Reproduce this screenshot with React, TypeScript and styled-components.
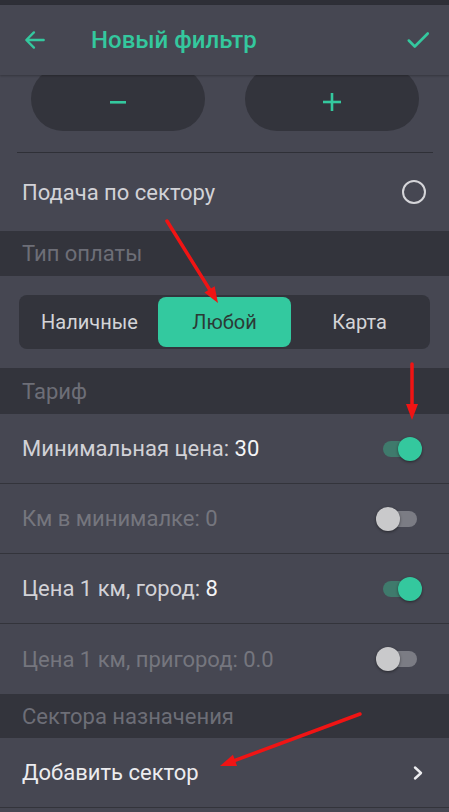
import React from 'react';
import styled, {createGlobalStyle} from "styled-components";

const GlobalStyle = createGlobalStyle`
  body {
    margin: 0;
    background: #464752;
    font-family: Roboto, "Noto Sans", sans-serif;
  }
`;

const GREEN = "#34c89e";

const Screen = styled.div`
  position: relative;
  width: 449px;
  height: 812px;
  overflow: hidden;
  background: #464752;
`;

const StatusStrip = styled.div`
  height: 5px;
  background: #2e2f37;
`;

const AppBar = styled.div`
  position: relative;
  z-index: 2;
  height: 70px;
  display: flex;
  align-items: center;
  padding: 0 18px 0 22px;
  background: #464752;
  box-shadow: 0 1px 2px rgba(0, 0, 0, 0.25);
`;

const Title = styled.div`
  flex: 1;
  margin-left: 43px;
  color: ${GREEN};
  font-size: 24px;
  font-weight: 500;
`;

const StepperWrap = styled.div`
  padding: 0 16px 0 17px;
`;

const Stepper = styled.div`
  display: flex;
  justify-content: space-between;
  padding: 0 14px 21px 14px;
  margin-top: -8px;
  border-bottom: 1px solid #2f3037;
`;

const Pill = styled.div`
  width: 174px;
  height: 64px;
  border-radius: 32px;
  background: #33343c;
  display: flex;
  align-items: center;
  justify-content: center;
  padding-top: 6px;
  box-sizing: border-box;
`;

const Row = styled.div<{tall?: boolean; last?: boolean}>`
  height: ${({tall}) => (tall ? 78 : 70)}px;
  display: flex;
  align-items: center;
  justify-content: space-between;
  padding: 0 22px;
  border-bottom: ${({last}) => (last ? "none" : "1px solid #33343b")};
  box-sizing: border-box;
`;

const Label = styled.div<{disabled?: boolean; bright?: boolean}>`
  font-size: 22px;
  color: ${({disabled, bright}) => (disabled ? "#75767e" : bright ? "#ececef" : "#d2d2d7")};
  b {
    font-weight: 400;
    color: #f4f4f6;
  }
`;

const SectionHeader = styled.div<{h: number}>`
  height: ${({h}) => h}px;
  display: flex;
  align-items: center;
  padding: 0 22px;
  background: #33343c;
  color: #6d6e77;
  font-size: 22px;
  box-sizing: border-box;
`;

const Radio = styled.div`
  width: 20px;
  height: 20px;
  border: 2.5px solid #d5d5d9;
  border-radius: 50%;
  margin-right: 1px;
`;

const SegmentArea = styled.div`
  padding: 19px;
`;

const Segment = styled.div`
  height: 54px;
  display: flex;
  align-items: center;
  background: #33343c;
  border-radius: 8px;
  padding: 2px;
  box-sizing: border-box;
`;

const SegItem = styled.div<{active?: boolean}>`
  flex: 1;
  height: 50px;
  display: flex;
  align-items: center;
  justify-content: center;
  border-radius: 8px;
  font-size: 20px;
  color: ${({active}) => (active ? "#2b3a36" : "#d4d4d8")};
  background: ${({active}) => (active ? "#33c99f" : "transparent")};
  &:first-child {
    flex: 0 0 137px;
  }
  &:nth-child(2) {
    flex: 0 0 133px;
  }
`;

const Track = styled.div<{on?: boolean}>`
  position: relative;
  width: 34px;
  height: 16px;
  border-radius: 8px;
  margin-right: 10px;
  background: ${({on}) => (on ? "#3f7a6c" : "#7b7c84")};
`;

const Thumb = styled.div<{on?: boolean}>`
  position: absolute;
  top: -4px;
  left: ${({on}) => (on ? 15 : -7)}px;
  width: 24px;
  height: 24px;
  border-radius: 50%;
  background: ${({on}) => (on ? GREEN : "#c9c9cb")};
  box-shadow: 0 1px 3px rgba(0, 0, 0, 0.45);
`;

const Overlay = styled.svg`
  position: absolute;
  left: 0;
  top: 0;
  pointer-events: none;
  z-index: 5;
`;

const Toggle = ({on}: {on?: boolean}) => (
    <Track on={on}>
        <Thumb on={on}/>
    </Track>
);

const Arrow = ({x1, y1, x2, y2}: {x1: number; y1: number; x2: number; y2: number}) => {
    const a = Math.atan2(y2 - y1, x2 - x1);
    const len = 16;
    const w = 6;
    const bx = x2 - Math.cos(a) * len;
    const by = y2 - Math.sin(a) * len;
    const px = -Math.sin(a) * w;
    const py = Math.cos(a) * w;
    return (
        <g>
            <line x1={x1} y1={y1} x2={bx} y2={by} stroke="#f01414" strokeWidth={3.5} strokeLinecap="round"/>
            <polygon points={`${x2},${y2} ${bx + px},${by + py} ${bx - px},${by - py}`} fill="#f01414"/>
        </g>
    );
};

const tariffs = [
    {label: "Минимальная цена: ", value: "30", on: true},
    {label: "Км в минималке: 0", value: "", on: false},
    {label: "Цена 1 км, город: ", value: "8", on: true},
    {label: "Цена 1 км, пригород: 0.0", value: "", on: false},
];

const App: React.FC = () => {
    return (
        <Screen>
            <GlobalStyle/>
            <StatusStrip/>
            <AppBar>
                <svg width="26" height="26" viewBox="0 0 24 24" fill="none" stroke={GREEN} strokeWidth="2.2" strokeLinecap="round" strokeLinejoin="round">
                    <path d="M20 12H4.5M11 5l-7 7 7 7"/>
                </svg>
                <Title>Новый фильтр</Title>
                <svg width="26" height="26" viewBox="0 0 24 24" fill="none" stroke={GREEN} strokeWidth="2.4" strokeLinecap="round" strokeLinejoin="round">
                    <path d="M3.5 12.5l5.5 5.5L21 6"/>
                </svg>
            </AppBar>
            <StepperWrap>
                <Stepper>
                    <Pill>
                        <svg width="18" height="18" viewBox="0 0 18 18">
                            <rect x="1" y="8" width="16" height="2.6" fill={GREEN}/>
                        </svg>
                    </Pill>
                    <Pill>
                        <svg width="20" height="20" viewBox="0 0 20 20">
                            <rect x="1" y="8.7" width="18" height="2.6" fill={GREEN}/>
                            <rect x="8.7" y="1" width="2.6" height="18" fill={GREEN}/>
                        </svg>
                    </Pill>
                </Stepper>
            </StepperWrap>
            <Row tall last>
                <Label>Подача по сектору</Label>
                <Radio/>
            </Row>
            <SectionHeader h={45}>Тип оплаты</SectionHeader>
            <SegmentArea>
                <Segment>
                    <SegItem>Наличные</SegItem>
                    <SegItem active>Любой</SegItem>
                    <SegItem>Карта</SegItem>
                </Segment>
            </SegmentArea>
            <SectionHeader h={46}>Тариф</SectionHeader>
            {tariffs.map((t, i) => (
                <Row key={i} last={i === tariffs.length - 1}>
                    <Label disabled={!t.on}>
                        {t.label}
                        {t.value && <b>{t.value}</b>}
                    </Label>
                    <Toggle on={t.on}/>
                </Row>
            ))}
            <SectionHeader h={44}>Сектора назначения</SectionHeader>
            <Row>
                <Label bright>Добавить сектор</Label>
                <svg width="14" height="16" viewBox="0 0 14 16" fill="none" stroke="#ededf0" strokeWidth="2.4" strokeLinecap="round" strokeLinejoin="round" style={{marginRight: 2}}>
                    <path d="M4 2.5l6 5.5-6 5.5"/>
                </svg>
            </Row>
            <Overlay width="449" height="812" viewBox="0 0 449 812">
                <Arrow x1={167} y1={221} x2={218} y2={303}/>
                <Arrow x1={412} y1={364} x2={412} y2={420}/>
                <Arrow x1={360} y1={714} x2={220} y2={766}/>
            </Overlay>
        </Screen>
    );
};

export default App;
